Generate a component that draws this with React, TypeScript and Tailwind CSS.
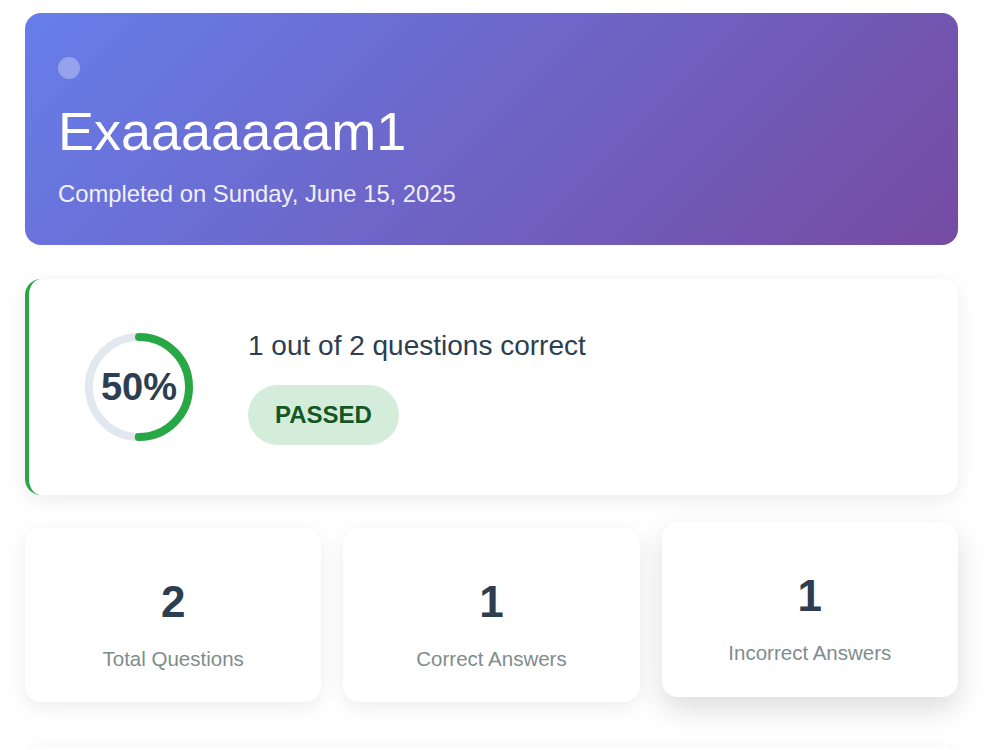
import React from "react";

const stats = [
  { value: 2, label: "Total Questions" },
  { value: 1, label: "Correct Answers" },
  { value: 1, label: "Incorrect Answers", lifted: true },
];

function ScoreRing({ percent }: { percent: number }) {
  const r = 50;
  const c = 2 * Math.PI * r;
  return (
    <div className="relative w-[108px] h-[108px] shrink-0">
      <svg width="108" height="108" viewBox="0 0 108 108" className="-rotate-90">
        <circle cx="54" cy="54" r={r} fill="none" stroke="#e2e8f0" strokeWidth="8" />
        <circle
          cx="54"
          cy="54"
          r={r}
          fill="none"
          stroke="#28a745"
          strokeWidth="8"
          strokeLinecap="round"
          strokeDasharray={`${(c * percent) / 100} ${c}`}
        />
      </svg>
      <div className="absolute inset-0 flex items-center justify-center text-[38px] font-bold text-[#2c3e50]">
        {percent}%
      </div>
    </div>
  );
}

export default function App() {
  return (
    <div className="min-h-screen bg-white font-['Liberation_Sans',Arial,sans-serif] overflow-hidden">
      <div className="w-[933px] ml-[25px] pt-[13px]">
        {/* header */}
        <div className="rounded-2xl bg-[linear-gradient(135deg,#667eea_0%,#764ba2_100%)] px-[33px] pt-[44px] pb-[35px] text-white">
          <div className="w-[22px] h-[22px] rounded-full bg-white/30" />
          <h1 className="mt-[20px] text-[54px] leading-[1.2] font-normal">Exaaaaaaam1</h1>
          <p className="mt-[13px] text-[23.8px] leading-[1.4] text-white/90">Completed on Sunday, June 15, 2025</p>
        </div>

        {/* score */}
        <div className="mt-[34px] h-[216px] rounded-2xl bg-white border-l-4 border-[#28a745] shadow-[0_5px_20px_rgba(0,0,0,0.08)] flex items-center pl-[56px] gap-[55px]">
          <ScoreRing percent={50} />
          <div className="flex flex-col items-start gap-[23px]">
            <div className="text-[28px] leading-[1.2] text-[#2c3e50]">1 out of 2 questions correct</div>
            <span className="rounded-full bg-[#d4edda] text-[#155724] font-bold text-[24px] px-[27px] py-[16px] leading-[28px]">
              PASSED
            </span>
          </div>
        </div>

        {/* stats */}
        <div className="mt-[33px] grid grid-cols-3 gap-[22px]">
          {stats.map((s) => (
            <div
              key={s.label}
              className={
                s.lifted
                  ? "h-[175px] -translate-y-[6px] rounded-2xl bg-white shadow-[0_12px_30px_rgba(0,0,0,0.14)] flex flex-col items-center pt-[48px]"
                  : "h-[174px] rounded-2xl bg-white shadow-[0_5px_20px_rgba(0,0,0,0.08)] flex flex-col items-center pt-[48px]"
              }
            >
              <div className="text-[44px] leading-[1.2] font-bold text-[#2c3e50]">{s.value}</div>
              <div className="mt-[15px] text-[20.5px] leading-[1.5] text-[#7f8c8d]">{s.label}</div>
            </div>
          ))}
        </div>

        {/* answers list */}
        <div className="mt-[44px] h-[200px] rounded-2xl bg-white shadow-[0_5px_20px_rgba(0,0,0,0.08)]" />
      </div>
    </div>
  );
}
